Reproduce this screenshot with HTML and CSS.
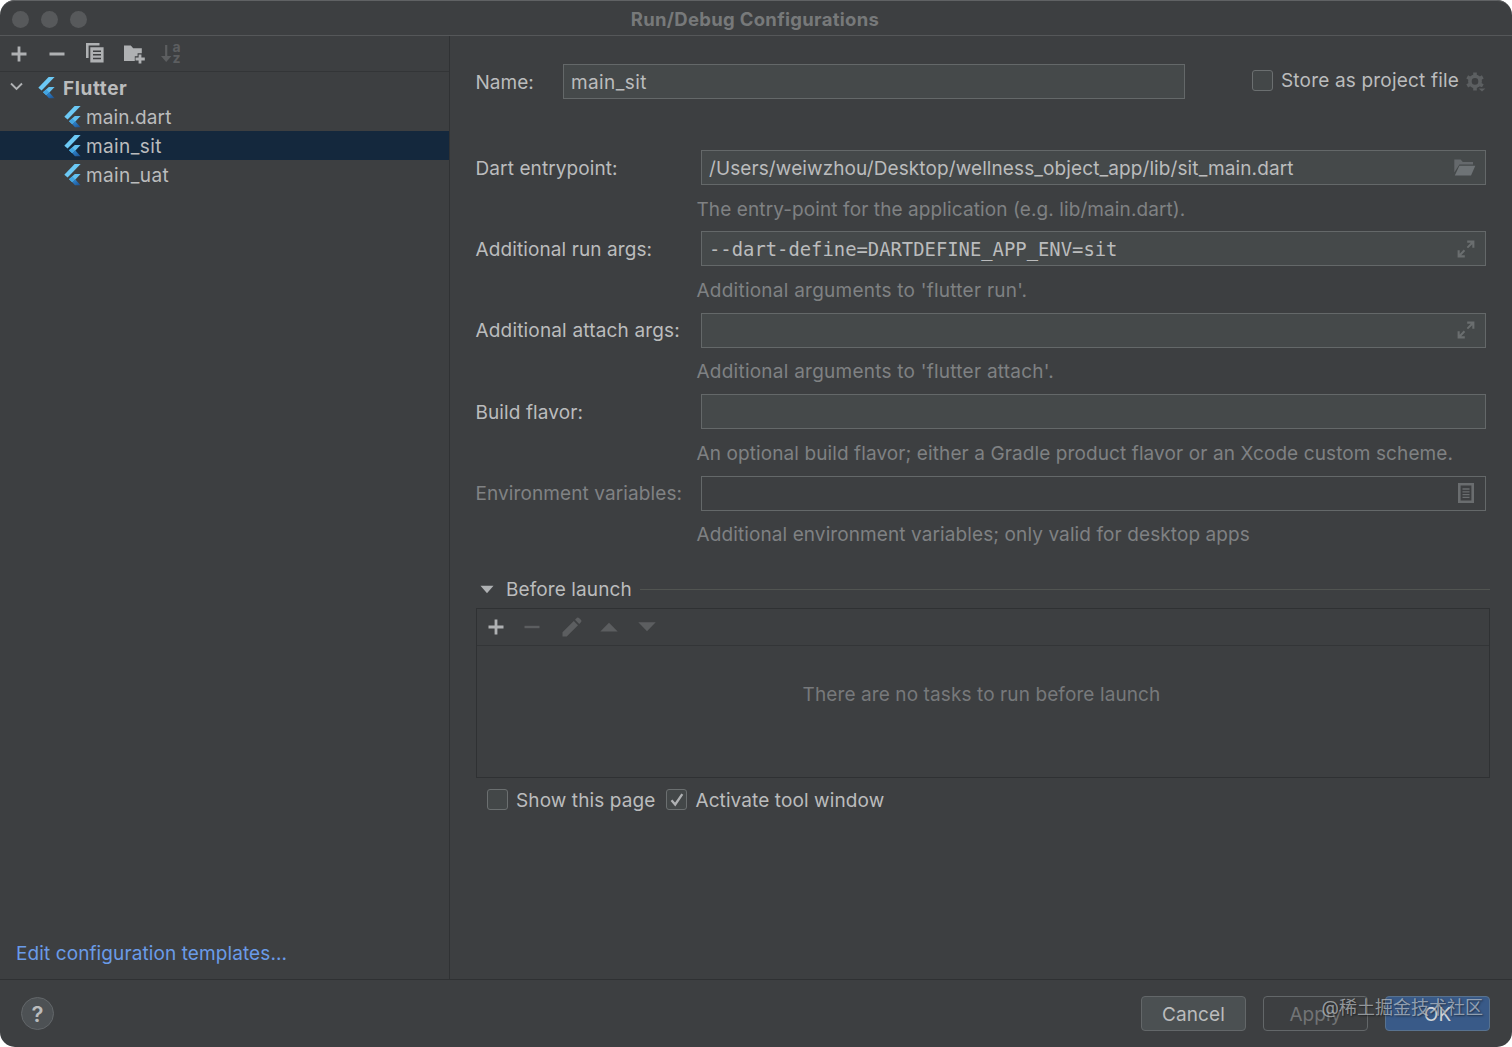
FILE: index.html
```html
<!DOCTYPE html>
<html lang="en">
<head>
    <meta charset="UTF-8">
    <meta name="viewport" content="width=device-width, initial-scale=1.0">
    <title>Run/Debug Configurations</title>
    <link rel="stylesheet" href="styles.css">
</head>
<body>
    <svg class="defs" width="0" height="0">
        <defs>
            <linearGradient id="tail" x1="0" y1="0" x2="1" y2="1">
                <stop offset="0.3" stop-color="#2a7cc4"/>
                <stop offset="1" stop-color="#1c4f8f"/>
            </linearGradient>
            <symbol id="flutter" viewBox="0 0 17 22">
                <path d="M10.6 0H16.6L3.6 13.4L0.3 10.7Z" fill="#6cc9f5"/>
                <path d="M10.8 10H16.6L11.4 15.4L8.3 18.3L5 15.2Z" fill="#62c0f0"/>
                <path d="M5 15.2L8.3 12.4L11.4 15.4L8.3 18.3Z" fill="#43a5e2"/>
                <path d="M8.3 18.3L11.4 15.4L16.6 21.2H11Z" fill="url(#tail)"/>
            </symbol>
            <symbol id="expand" viewBox="0 0 18 18">
                <path d="M10.2 0.6H17.4V7.8H15.3V4.3L11 8.3L9.7 7L13.8 2.7H10.2Z"/>
                <path d="M7.8 17.4H0.6V10.2H2.7V13.8L6.8 9.6L8.2 11L4.2 15.3H7.8Z"/>
            </symbol>
        </defs>
    </svg>

    <div class="window">
        <header class="titlebar">
            <div class="lights"><i></i><i></i><i></i></div>
            <h1>Run/Debug Configurations</h1>
        </header>

        <div class="content">
            <aside class="sidebar">
                <div class="toolbar">
                    <svg width="16" height="16" viewBox="0 0 16 16"><path d="M8 0.5V15.5M0.5 8H15.5" stroke="#afb1b3" stroke-width="2.8"/></svg>
                    <svg width="16" height="16" viewBox="0 0 16 16"><path d="M0.5 8H15.5" stroke="#afb1b3" stroke-width="2.8"/></svg>
                    <svg class="copy" width="18" height="20" viewBox="0 0 18 20">
                        <path d="M0 0H13.5V2.6H2.6V15H0Z" fill="#afb1b3"/>
                        <path d="M4.3 4.3H17.6V19.5H4.3Z" fill="#afb1b3"/>
                        <path d="M7 8.2H15M7 11.8H15M7 15.4H15" stroke="#3d3f41" stroke-width="1.5"/>
                    </svg>
                    <svg class="folder-add" width="21" height="19" viewBox="0 0 21 19">
                        <path d="M0 0.5H6.8L9.2 3.2H17.8V8.3H13.6V11.2H10.8V16H0Z" fill="#afb1b3"/>
                        <path d="M16 9.5V18.5M11.5 14H20.8" stroke="#afb1b3" stroke-width="2.8"/>
                    </svg>
                    <svg class="sort" width="20" height="20" viewBox="0 0 20 20">
                        <path d="M5.2 1V13" stroke="#5c5e60" stroke-width="2.2"/>
                        <path d="M0 12H10.4L5.2 18Z" fill="#5c5e60"/>
                        <text x="11.4" y="8.3">a</text>
                        <text x="11.4" y="18.6">z</text>
                    </svg>
                </div>

                <ul class="tree">
                    <li class="group">
                        <svg class="chevron" width="13" height="9" viewBox="0 0 13 9"><path d="M1 1.5L6.5 7L12 1.5" fill="none" stroke="#afb1b3" stroke-width="1.9"/></svg>
                        <svg class="flutter"><use href="#flutter"/></svg>
                        <span>Flutter</span>
                    </li>
                    <li><svg class="flutter"><use href="#flutter"/></svg><span class="dart-item">main.dart</span></li>
                    <li class="selected"><svg class="flutter"><use href="#flutter"/></svg><span>main_sit</span></li>
                    <li><svg class="flutter"><use href="#flutter"/></svg><span>main_uat</span></li>
                </ul>

                <a class="templates">Edit configuration templates...</a>
            </aside>

            <main class="panel">
                <div class="name-row">
                    <label class="name-label">Name:</label>
                    <div class="field name-field"><span>main_sit</span></div>
                    <div class="check store">
                        <span class="box"></span>
                        <span class="text">Store as project file</span>
                        <svg width="20" height="20" viewBox="0 0 20 20">
                            <circle cx="9" cy="9.4" r="5.1" fill="none" stroke="#5c5f61" stroke-width="3.6"/>
                            <path d="M9 0.4V4M9 15V18.4M1.2 4.9L4.2 6.6M13.8 12.2L16.8 13.9M1.2 13.9L4.2 12.2M13.8 6.6L16.8 4.9" stroke="#5c5f61" stroke-width="3.6"/>
                            <path d="M11.8 15H20V20H11.8Z" fill="#3d3f41"/>
                            <path d="M12.6 16.4H19.4L16 19.6Z" fill="#5c5f61"/>
                        </svg>
                    </div>
                </div>

                <div class="form">
                    <div class="row">
                        <label>Dart entrypoint:</label>
                        <div class="field">
                            <span>/Users/weiwzhou/Desktop/wellness_object_app/lib/sit_main.dart</span>
                            <svg width="22" height="17" viewBox="0 0 22 17"><path d="M0.3 0.5H6.6L8.8 3H19V5.4H5.4L0.3 13.5Z" fill="#65696c"/><path d="M5.4 6.7H21.3L17 16.4H0.8Z" fill="#6e7376"/></svg>
                        </div>
                        <p>The entry-point for the application (e.g. lib/main.dart).</p>
                    </div>
                    <div class="row">
                        <label>Additional run args:</label>
                        <div class="field mono">
                            <span>--dart-define=DARTDEFINE_APP_ENV=sit</span>
                            <svg class="expand"><use href="#expand"/></svg>
                        </div>
                        <p class="quoted">Additional arguments to 'flutter run'.</p>
                    </div>
                    <div class="row">
                        <label class="attach">Additional attach args:</label>
                        <div class="field">
                            <span></span>
                            <svg class="expand"><use href="#expand"/></svg>
                        </div>
                        <p class="quoted">Additional arguments to 'flutter attach'.</p>
                    </div>
                    <div class="row">
                        <label>Build flavor:</label>
                        <div class="field"></div>
                        <p>An optional build flavor; either a Gradle product flavor or an Xcode custom scheme.</p>
                    </div>
                    <div class="row disabled">
                        <label>Environment variables:</label>
                        <div class="field">
                            <span></span>
                            <svg class="list" width="16" height="20" viewBox="0 0 16 20"><path d="M1.3 1.3H14.7V18.7H1.3Z" fill="none" stroke="#6a6d6f" stroke-width="2.6"/><path d="M4.5 6H11.5M4.5 8.8H11.5M4.5 11.6H11.5M4.5 14.4H11.5" stroke="#6a6d6f" stroke-width="1.3"/></svg>
                        </div>
                        <p>Additional environment variables; only valid for desktop apps</p>
                    </div>
                </div>

                <div class="section-title">
                    <svg width="14" height="9" viewBox="0 0 14 9"><path d="M0.5 0.8H13.5L7 8.2Z" fill="#afb1b3"/></svg>
                    <span>Before launch</span>
                    <hr>
                </div>

                <div class="tasks">
                    <div class="tasks-bar">
                        <svg width="16" height="16" viewBox="0 0 16 16"><path d="M8 0.5V15.5M0.5 8H15.5" stroke="#afb1b3" stroke-width="2.8"/></svg>
                        <svg width="16" height="16" viewBox="0 0 16 16"><path d="M0.5 8H15.5" stroke="#5c5e60" stroke-width="2.4"/></svg>
                        <svg class="pencil" width="20" height="20" viewBox="0 0 20 20"><path d="M0.5 15.3L11.8 4L16 8.2L4.7 19.5H0.5ZM13 2.8L15 0.8Q16 0.1 17 0.9L19.1 3Q19.9 4 19.1 5L17.2 7Z" fill="#5c5e60"/></svg>
                        <svg width="18" height="10" viewBox="0 0 18 10"><path d="M0.3 9.5L9 0.8L17.7 9.5Z" fill="#5c5e60"/></svg>
                        <svg width="18" height="10" viewBox="0 0 18 10"><path d="M0.3 0.3H17.7L9 9.3Z" fill="#5c5e60"/></svg>
                    </div>
                    <p class="empty">There are no tasks to run before launch</p>
                </div>

                <div class="options">
                    <div class="check">
                        <span class="box"></span>
                        <span class="text">Show this page</span>
                    </div>
                    <div class="check">
                        <span class="box"><svg width="14" height="14" viewBox="0 0 14 14"><path d="M1.5 7.2L5.2 11.5L12.3 1.2" fill="none" stroke="#afb1b3" stroke-width="2.3"/></svg></span>
                        <span class="text">Activate tool window</span>
                    </div>
                </div>
            </main>
        </div>

        <footer class="footer">
            <div class="help">?</div>
            <div class="buttons">
                <div class="btn">Cancel</div>
                <div class="btn btn-disabled">Apply</div>
                <div class="btn btn-primary">OK</div>
            </div>
            <div class="watermark">@稀土掘金技术社区</div>
        </footer>
    </div>
</body>
</html>
```
FILE: styles.css
```css
* {
    box-sizing: border-box;
}

html, body {
    margin: 0;
    padding: 0;
    background-color: #fff;
}

body {
    font-family: Inter, "Noto Sans CJK SC", sans-serif;
    font-size: 19px;
    line-height: 24px;
    letter-spacing: 0.1px;
    color: #bbbcbd;
    white-space: nowrap;
}

h1, p, ul {
    margin: 0;
    padding: 0;
}

svg {
    display: block;
    flex: none;
}

.defs {
    position: absolute;
}

.window {
    display: flex;
    flex-direction: column;
    width: 1512px;
    height: 1047px;
    background-color: #3d3f41;
    border-radius: 15px;
    overflow: hidden;
}

/* title bar */
.titlebar {
    display: grid;
    grid-template-columns: 1fr auto 1fr;
    align-items: center;
    height: 36px;
    padding-left: 12px;
    padding-right: 14px;
    padding-top: 2px;
    border-top: 1px solid #606264;
    border-bottom: 1px solid #555759;
    border-radius: 15px 15px 0 0;
}

.titlebar h1 {
    font-size: 18.5px;
    font-weight: 700;
    letter-spacing: 0.3px;
    color: #77797a;
}

.lights {
    display: flex;
    gap: 12px;
    margin-top: 1px;
}

.lights i {
    width: 17px;
    height: 17px;
    border-radius: 50%;
    background-color: #57595b;
}

.content {
    display: flex;
    flex: 1;
}

/* left side */
.sidebar {
    display: flex;
    flex-direction: column;
    width: 450px;
    border-right: 1px solid #303234;
}

.toolbar {
    display: flex;
    align-items: center;
    gap: 22px;
    height: 36px;
    padding-left: 11px;
    border-bottom: 1px solid #333537;
}

.copy {
    margin-left: -1px;
    margin-top: -1px;
}

.folder-add {
    margin-top: 2px;
    margin-left: -2px;
}

.sort {
    margin-left: -6px;
    overflow: visible;
}

.sort text {
    font-size: 14px;
    font-weight: 700;
    letter-spacing: 0;
    fill: #5c5e60;
}

.tree {
    flex: 1;
    list-style: none;
    padding-top: 1px;
}

.tree li {
    display: flex;
    align-items: center;
    height: 29px;
    padding-left: 64px;
    gap: 5px;
    letter-spacing: 0.4px;
}

.tree span {
    padding-top: 2px;
}

.tree .dart-item {
    letter-spacing: 0.1px;
}

.tree .group {
    padding-left: 10px;
    gap: 8px;
    font-weight: 700;
    letter-spacing: 0.6px;
}

.tree .chevron {
    margin-right: 7px;
    margin-top: -3px;
}

.tree .selected {
    background-color: #14283d;
}

.flutter {
    width: 17px;
    height: 22px;
}

.templates {
    padding: 0 0 13px 16px;
    color: #6a9be8;
}

/* right side */
.panel {
    flex: 1;
    padding: 28px 22px 0 26px;
}

.name-row {
    display: flex;
    align-items: center;
    height: 35px;
}

label {
    padding-top: 2px;
    margin-left: -0.5px;
}

.name-label {
    width: 87.5px;
    letter-spacing: 0;
}

.field {
    display: flex;
    align-items: center;
    justify-content: space-between;
    height: 35px;
    padding: 0 9px 0 7px;
    background-color: #45494a;
    border: 1px solid #646869;
}

.field span {
    padding-top: 2px;
}

.name-field {
    width: 622px;
    letter-spacing: 0.4px;
}

.check {
    display: flex;
    align-items: center;
    gap: 8px;
}

.check .text {
    padding-top: 2px;
}

.box {
    display: flex;
    align-items: center;
    justify-content: center;
    width: 21px;
    height: 21px;
    background-color: #434748;
    border: 1px solid #6b6f70;
    border-radius: 3px;
}

.store {
    margin-left: 67px;
    margin-top: -3px;
    letter-spacing: 0.18px;
}

.store svg {
    margin-top: 4px;
    margin-left: -1px;
}

.form {
    margin-top: 51px;
}

.row {
    display: grid;
    grid-template-columns: 225px 785px;
    grid-template-rows: 35px 46.4px;
    align-items: center;
}

.row .attach {
    letter-spacing: 0.17px;
}

.row p {
    grid-column: 2;
    align-self: start;
    margin-left: -4.5px;
    margin-top: 12.5px;
    color: #7f8183;
}

.row .quoted {
    letter-spacing: 0.24px;
}

.mono {
    font-family: "DejaVu Sans Mono", monospace;
    font-size: 18.85px;
    letter-spacing: 0;
}

.expand {
    width: 18px;
    height: 18px;
    margin-right: 1px;
    fill: #6a6e6f;
}

.list {
    margin-right: 2px;
}

.disabled label {
    color: #808284;
}

.disabled .field {
    background-color: #3d3f41;
}

.section-title {
    display: flex;
    align-items: center;
    height: 24px;
    margin-top: 21px;
    padding-left: 4px;
}

.section-title span {
    margin-left: 12px;
    margin-right: 8px;
    padding-top: 1px;
}

.section-title hr {
    flex: 1;
    margin: 0;
    border: 0;
    border-top: 1px solid #515451;
}

.tasks {
    height: 170px;
    margin-top: 6px;
    border: 1px solid #2f3133;
}

.tasks-bar {
    display: flex;
    align-items: center;
    height: 37px;
    padding-left: 11px;
    gap: 20px;
    border-bottom: 1px solid #333537;
}

.tasks-bar .pencil {
    margin-left: 2px;
    margin-right: -2px;
}

.empty {
    margin-top: 37px;
    padding-right: 3px;
    text-align: center;
    color: #77797b;
}

.options {
    display: flex;
    gap: 11px;
    margin-top: 9px;
    padding-left: 11px;
}

/* bottom bar */
.footer {
    position: relative;
    display: flex;
    align-items: center;
    justify-content: space-between;
    height: 68px;
    padding: 0 22px 0 21px;
    border-top: 1px solid #2f3133;
}

.help {
    width: 33px;
    height: 33px;
    border: 1px solid #63676a;
    border-radius: 50%;
    background-color: #4d5154;
    font-size: 22px;
    font-weight: 600;
    line-height: 32px;
    text-align: center;
}

.buttons {
    display: flex;
    gap: 17px;
}

.btn {
    width: 105px;
    height: 35px;
    border: 1px solid #636769;
    border-radius: 4px;
    background-color: #4b5052;
    line-height: 35px;
    text-align: center;
}

.btn-disabled {
    background-color: #3d3f41;
    color: #727476;
}

.btn-primary {
    border-color: #58728f;
    background-color: #395a88;
    color: #d0d4d9;
}

.watermark {
    position: absolute;
    right: 29px;
    top: 16px;
    font-size: 18px;
    letter-spacing: 0;
    color: rgba(205, 210, 215, 0.65);
    text-shadow: 1px 1px 2px rgba(0, 0, 0, 0.5);
}
```
